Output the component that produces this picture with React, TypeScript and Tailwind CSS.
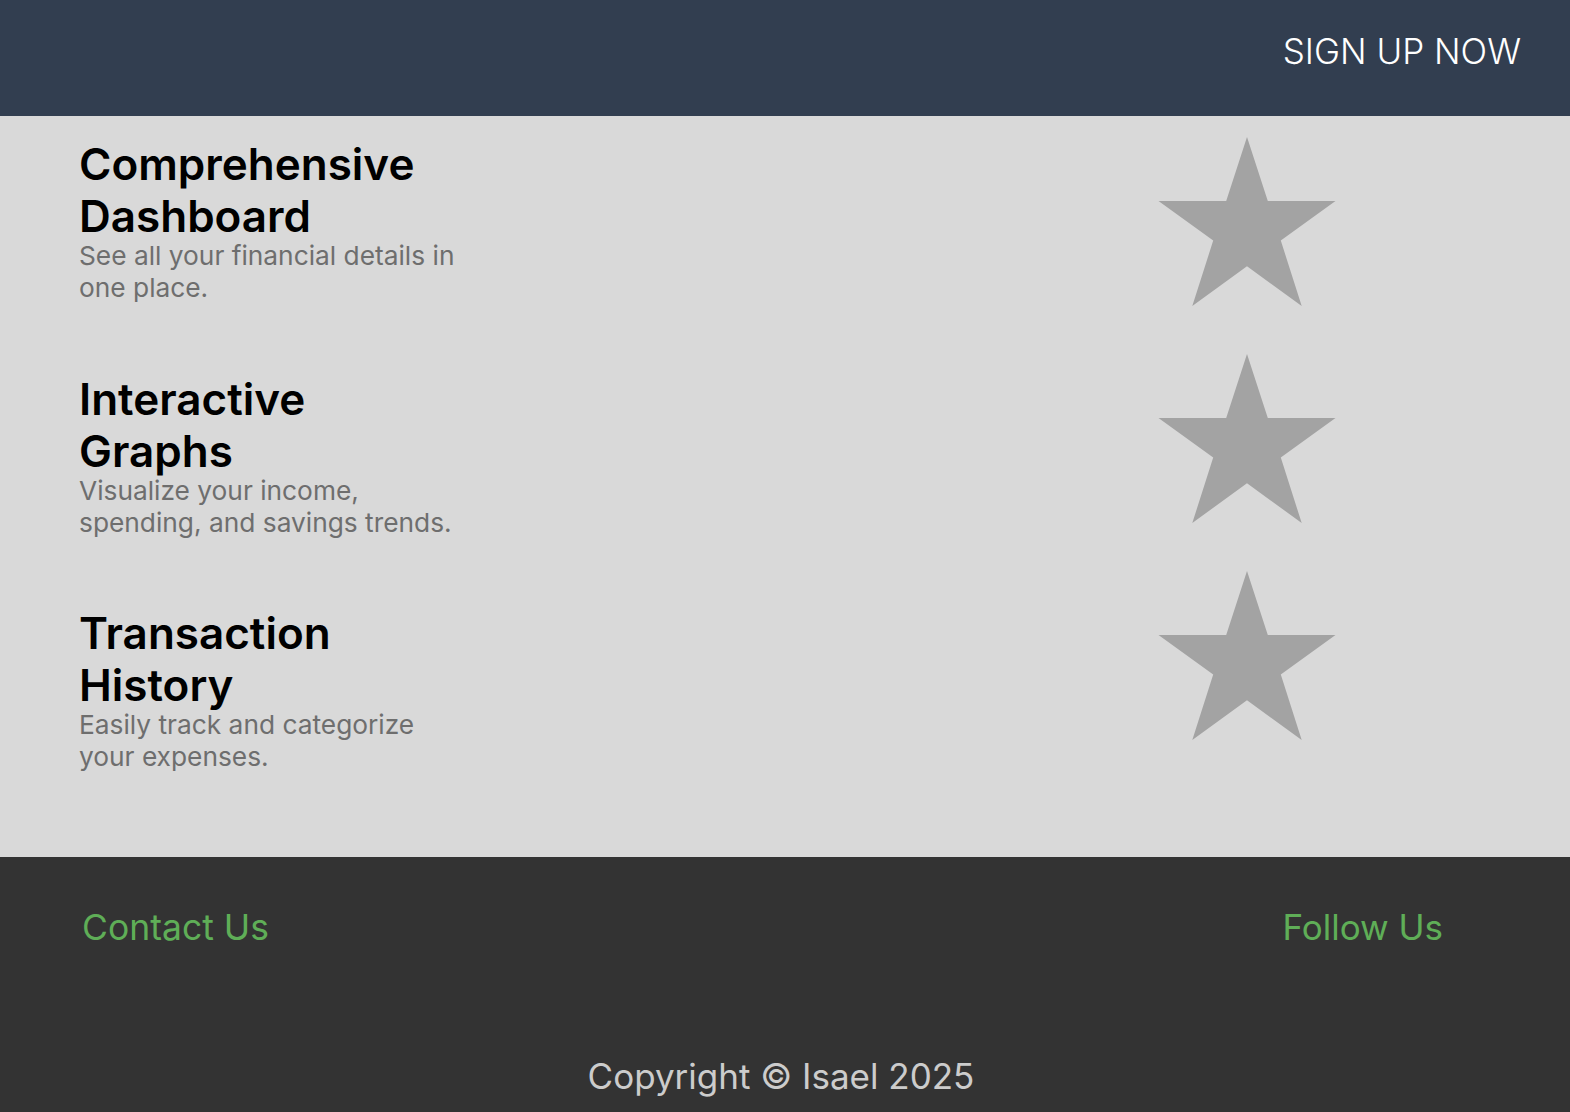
import React from 'react'

const features = [
  {
    title: 'Comprehensive Dashboard',
    description: 'See all your financial details in one place.',
  },
  {
    title: 'Interactive Graphs',
    description: 'Visualize your income, spending, and savings trends.',
  },
  {
    title: 'Transaction History',
    description: 'Easily track and categorize your expenses.',
  },
]

const Star = () => (
  <svg width="180" height="170" viewBox="0 0 180 170" className="block">
    <polygon
      fill="#a3a3a3"
      points="90,0 110.8,64 178.5,64 123.8,103.6 144.7,169 90,129.3 35.3,169 56.2,103.6 1.5,64 69.2,64"
    />
  </svg>
)

const App = () => {
  return (
    <div className="min-h-screen flex flex-col font-['Inter',_sans-serif]">
      <header className="h-[116px] bg-[#323e50] flex items-start justify-end pr-[49px] pt-[30px]">
        <a href="#" className="text-white text-[35px] leading-[42px] font-light">
          SIGN UP NOW
        </a>
      </header>

      <main className="bg-[#d9d9d9] h-[741px] flex items-start justify-between pl-[79px] pr-[233px] pt-[22px]">
        <div className="flex flex-col gap-[68.5px] w-[380px]">
          {features.map((item) => (
            <div key={item.title}>
              <h2 className="text-black text-[44px] leading-[52px] font-semibold">
                {item.title}
              </h2>
              <p className="text-[#6e6e6e] text-[26.3px] leading-[32px] -mt-[2px]">
                {item.description}
              </p>
            </div>
          ))}
        </div>
        <div className="flex flex-col gap-[47px] -mt-[1px]">
          {features.map((item) => (
            <Star key={item.title} />
          ))}
        </div>
      </main>

      <footer className="bg-[#333333] h-[255px] flex flex-col">
        <div className="flex items-baseline justify-between pl-[82px] pr-[127px] pt-[50px]">
          <span className="text-[#5fae57] text-[35.5px] leading-[40px]">Contact Us</span>
          <span className="text-[#5fae57] text-[35px] leading-[40px]">Follow Us</span>
        </div>
        <p className="text-[#cccccc] text-[35px] leading-[40px] text-center mt-[108px] pr-[8px]">
          Copyright © Isael 2025
        </p>
      </footer>
    </div>
  )
}

export default App
